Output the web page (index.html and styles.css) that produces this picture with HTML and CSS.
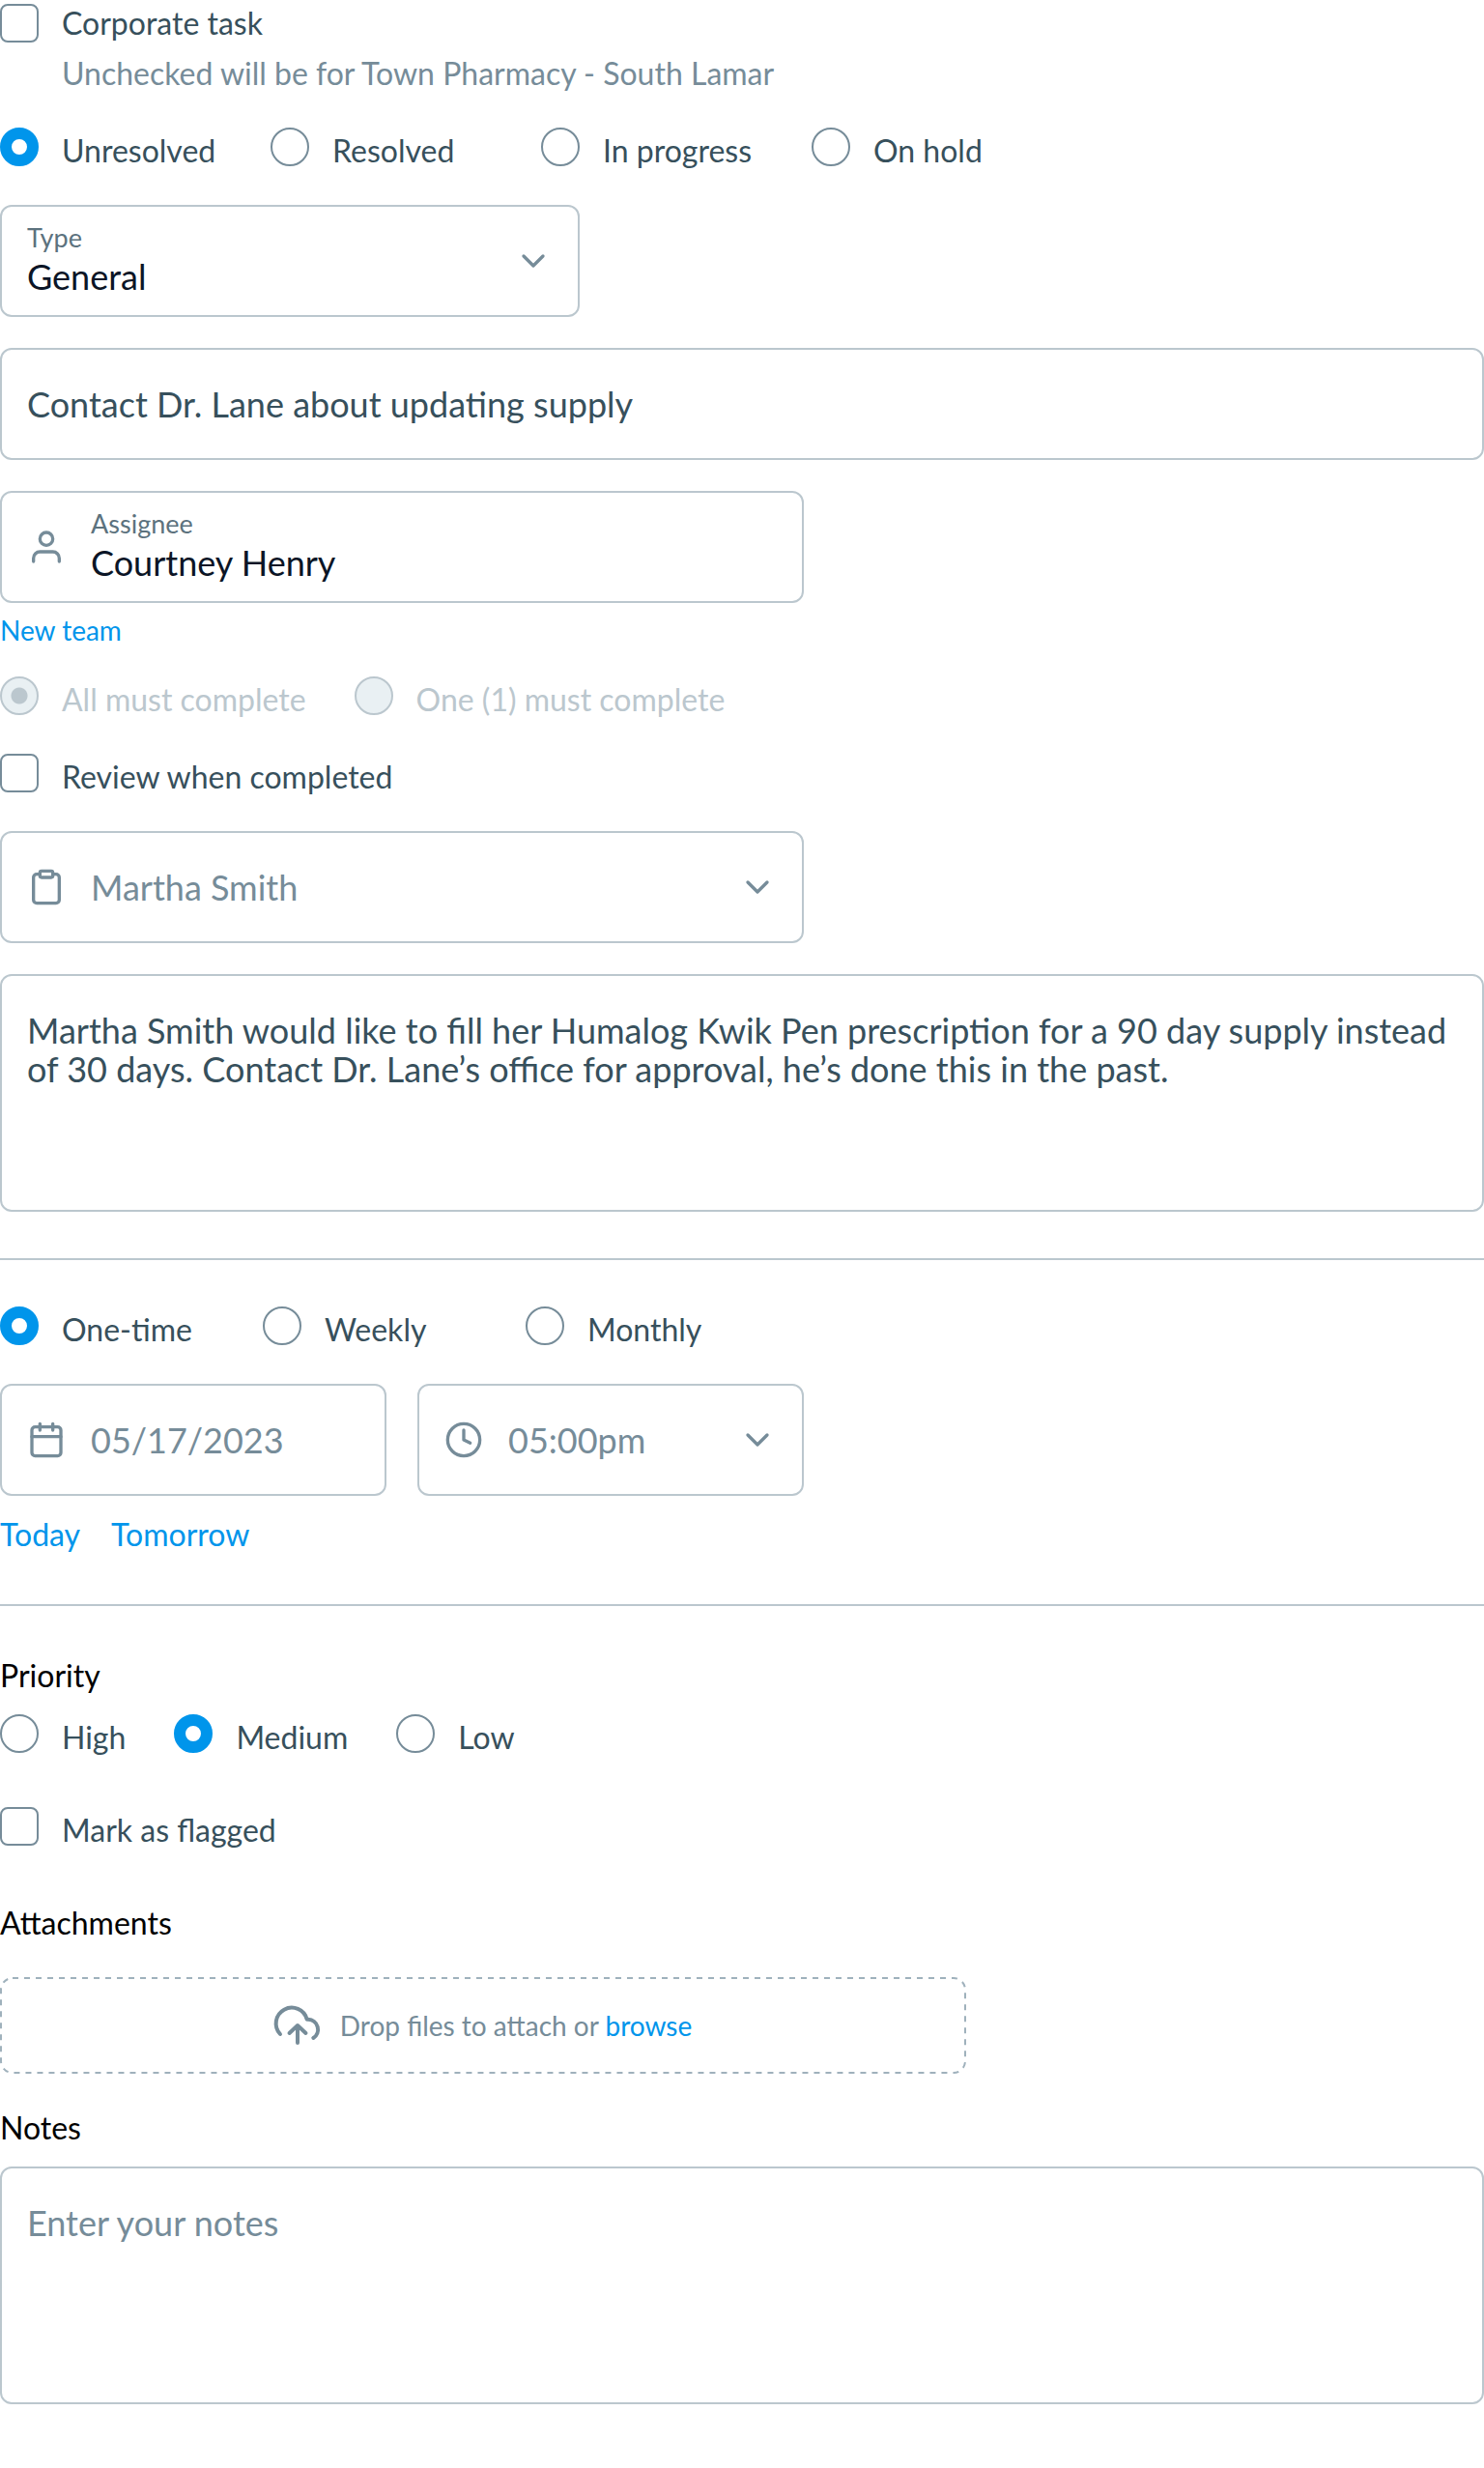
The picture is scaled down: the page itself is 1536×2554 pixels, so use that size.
FILE: index.html
```html
<!DOCTYPE html>
<html lang="en">
<head>
<meta charset="utf-8">
<meta name="viewport" content="width=device-width, initial-scale=1">
<title>Edit task</title>
<link rel="stylesheet" href="styles.css">
</head>
<body>
<form class="task-form">
  <div class="check-block">
    <label class="option"><input type="checkbox" class="box" aria-describedby="corp-hint"><span>Corporate task</span></label>
    <p class="hint" id="corp-hint">Unchecked will be for Town Pharmacy - South Lamar</p>
  </div>

  <div class="options options-status" role="radiogroup" aria-label="Status">
    <label class="option low"><input type="radio" class="dot" name="status" checked><span>Unresolved</span></label>
    <label class="option low"><input type="radio" class="dot" name="status"><span>Resolved</span></label>
    <label class="option low"><input type="radio" class="dot" name="status"><span>In progress</span></label>
    <label class="option low"><input type="radio" class="dot" name="status"><span>On hold</span></label>
  </div>

  <div class="field field-type">
    <div class="field-body">
      <label class="field-label" for="type">Type</label>
      <select id="type" class="control strong"><option>General</option></select>
    </div>
    <svg class="chevron" viewBox="0 0 24 24" aria-hidden="true"><path d="M6 9l6 6 6-6"/></svg>
  </div>

  <div class="field">
    <input type="text" class="control" aria-label="Title" value="Contact Dr. Lane about updating supply">
  </div>

  <div class="field field-half">
    <svg class="icon" viewBox="0 0 24 24" aria-hidden="true"><path d="M20 21v-2a4 4 0 0 0-4-4H8a4 4 0 0 0-4 4v2"/><circle cx="12" cy="7" r="4"/></svg>
    <div class="field-body">
      <label class="field-label" for="assignee">Assignee</label>
      <input type="text" id="assignee" class="control strong" value="Courtney Henry">
    </div>
  </div>
  <a class="link link-small" href="#new-team">New team</a>

  <div class="options options-rule" role="radiogroup" aria-label="Completion rule">
    <label class="option low disabled"><input type="radio" class="dot" name="rule" checked disabled><span>All must complete</span></label>
    <label class="option low disabled"><input type="radio" class="dot" name="rule" disabled><span>One (1) must complete</span></label>
  </div>

  <label class="option low review"><input type="checkbox" class="box"><span>Review when completed</span></label>

  <div class="field field-half">
    <svg class="icon" viewBox="0 0 24 24" aria-hidden="true"><path d="M16 4h2a2 2 0 0 1 2 2v14a2 2 0 0 1-2 2H6a2 2 0 0 1-2-2V6a2 2 0 0 1 2-2h2"/><rect x="8" y="2" width="8" height="4" rx="1"/></svg>
    <select class="control muted" aria-label="Patient"><option>Martha Smith</option></select>
    <svg class="chevron" viewBox="0 0 24 24" aria-hidden="true"><path d="M6 9l6 6 6-6"/></svg>
  </div>

  <textarea class="area" aria-label="Description">Martha Smith would like to fill her Humalog Kwik Pen prescription for a 90 day supply instead of 30 days. Contact Dr. Lane’s office for approval, he’s done this in the past.</textarea>

  <hr class="rule">

  <div class="options options-repeat" role="radiogroup" aria-label="Repeat">
    <label class="option low"><input type="radio" class="dot" name="repeat" checked><span>One-time</span></label>
    <label class="option low"><input type="radio" class="dot" name="repeat"><span>Weekly</span></label>
    <label class="option low"><input type="radio" class="dot" name="repeat"><span>Monthly</span></label>
  </div>

  <div class="due">
    <div class="field">
      <svg class="icon" viewBox="0 0 24 24" aria-hidden="true"><rect x="3" y="4" width="18" height="18" rx="2"/><path d="M16 2v4M8 2v4M3 10h18"/></svg>
      <input type="text" class="control muted" aria-label="Due date" value="05/17/2023">
    </div>
    <div class="field">
      <svg class="icon" viewBox="0 0 24 24" aria-hidden="true"><circle cx="12" cy="12" r="10"/><path d="M12 6v6l4 2"/></svg>
      <select class="control muted" aria-label="Due time"><option>05:00pm</option></select>
      <svg class="chevron" viewBox="0 0 24 24" aria-hidden="true"><path d="M6 9l6 6 6-6"/></svg>
    </div>
  </div>
  <div class="shortcuts">
    <a class="link" href="#today">Today</a>
    <a class="link" href="#tomorrow">Tomorrow</a>
  </div>

  <hr class="rule rule-low">

  <h2 class="heading" id="priority">Priority</h2>
  <div class="options options-priority" role="radiogroup" aria-labelledby="priority">
    <label class="option low"><input type="radio" class="dot" name="priority"><span>High</span></label>
    <label class="option low"><input type="radio" class="dot" name="priority" checked><span>Medium</span></label>
    <label class="option low"><input type="radio" class="dot" name="priority"><span>Low</span></label>
  </div>

  <label class="option low flag"><input type="checkbox" class="box"><span>Mark as flagged</span></label>

  <h2 class="heading attachments">Attachments</h2>
  <div class="drop">
    <svg class="drop-edge" aria-hidden="true"><rect x="1" y="1" rx="12"/></svg>
    <svg class="cloud" viewBox="0 0 48 40" aria-hidden="true"><path d="M6 29A16.300 16.300 0 1 1 33.700 13.700H35A10.500 10.500 0 0 1 40.300 33M24 38V20M15.500 28L24 20l8.500 8"/></svg>
    <p class="drop-text">Drop files to attach or <a class="link" href="#browse">browse</a></p>
  </div>

  <label class="heading notes-label" for="notes">Notes</label>
  <textarea class="area" id="notes" placeholder="Enter your notes"></textarea>
</form>
</body>
</html>
```
FILE: styles.css
```css
:root {
  --text: #37505c;
  --muted: #768c99;
  --edge: #bbc7ce;
  --accent: #0095eb;
}

* {
  box-sizing: border-box;
}

body {
  margin: 0;
  background: #fff;
  color: var(--text);
  font: 32px/40px Lato, "Liberation Sans", sans-serif;
}

.task-form {
  display: flex;
  flex-direction: column;
  padding: 4px 0 66px;
}

p,
h2 {
  margin: 0;
}

.option {
  display: flex;
  gap: 24px;
}

.low span {
  padding-top: 4px;
}

.hint {
  margin-top: 12px;
  padding-left: 64px;
  color: var(--muted);
}

.box,
.dot {
  flex: none;
  appearance: none;
  width: 40px;
  height: 40px;
  margin: 0;
  border: 2px solid var(--muted);
  background: #fff;
}

.box {
  border-radius: 8px;
}

.dot {
  border-radius: 50%;
}

.dot:checked {
  border: 12px solid var(--accent);
}

.dot:disabled {
  border: 2px solid var(--edge);
  background: #e9f0f3;
}

.dot:disabled:checked {
  background: radial-gradient(circle, var(--edge) 8px, #e9f0f3 9px);
}

.disabled {
  color: var(--edge);
}

.options {
  display: grid;
  justify-content: start;
}

.options-status {
  grid-template-columns: repeat(auto-fit, 280px);
  margin: 36px 0;
}

.options-rule {
  grid-auto-flow: column;
  gap: 50px;
  margin-top: 28px;
}

.options-repeat {
  grid-template-columns: repeat(auto-fit, 272px);
  margin: 48px 0 36px;
}

.options-priority {
  grid-auto-flow: column;
  gap: 50px;
  margin-top: 20px;
}

.review {
  margin: 36px 0;
}

.field {
  display: flex;
  align-items: center;
  max-width: 100%;
  height: 116px;
  margin-bottom: 32px;
  padding: 0 26px;
  border: 2px solid var(--edge);
  border-radius: 12px;
}

.field-type {
  width: 600px;
}

.field-half {
  width: 832px;
}

.icon,
.chevron {
  flex: none;
  width: 40px;
  height: 40px;
  fill: none;
  stroke: var(--muted);
  stroke-width: 2;
  stroke-linecap: round;
  stroke-linejoin: round;
}

.icon {
  margin-right: 26px;
}

.field-body {
  display: flex;
  flex: 1;
  flex-direction: column;
  gap: 2px;
  padding-bottom: 2px;
}

.field-label {
  color: #5c727e;
  font-size: 27px;
  line-height: 32px;
}

.control {
  flex: 1;
  appearance: none;
  min-width: 0;
  margin: 0;
  padding: 0;
  border: 0;
  background: none;
  color: var(--text);
  font: inherit;
  font-size: 36px;
  line-height: 44px;
}

.field-body .control {
  flex: none;
  height: 44px;
}

.strong {
  color: #0b1526;
}

.muted {
  color: var(--muted);
}

.link {
  color: var(--accent);
  text-decoration: none;
}

.link-small {
  align-self: flex-start;
  margin-top: -24px;
  font-size: 28px;
}

.area {
  height: 246px;
  padding: 36px 26px;
  border: 2px solid var(--edge);
  border-radius: 12px;
  background: none;
  color: var(--text);
  font: inherit;
  font-size: 36px;
  resize: none;
}

.area::placeholder {
  color: var(--muted);
}

.rule {
  width: 100%;
  height: 2px;
  margin: 48px 0 0;
  border: 0;
  background: var(--edge);
}

.rule-low {
  margin-top: 52px;
}

.due {
  display: grid;
  grid-template-columns: repeat(2, minmax(0, 400px));
  gap: 32px;
}

.due .field {
  margin-bottom: 20px;
}

.shortcuts {
  display: flex;
  gap: 32px;
}

.heading {
  color: #000;
  font-size: 32px;
  font-weight: 400;
}

.rule + .heading {
  margin-top: 52px;
}

.flag {
  margin-top: 52px;
}

.attachments {
  margin-top: 56px;
}

.drop {
  position: relative;
  display: flex;
  align-items: center;
  justify-content: center;
  gap: 20px;
  width: 1000px;
  max-width: 100%;
  height: 100px;
  margin-top: 36px;
}

.drop-edge {
  position: absolute;
  inset: 0;
  width: 100%;
  height: 100%;
  fill: none;
  stroke: #9fb1bc;
  stroke-width: 2;
  stroke-dasharray: 6;
}

.drop-edge rect {
  width: calc(100% - 2px);
  height: calc(100% - 2px);
}

.cloud {
  width: 48px;
  height: 40px;
  overflow: visible;
  fill: none;
  stroke: var(--muted);
  stroke-width: 4;
  stroke-linecap: round;
  stroke-linejoin: round;
}

.drop-text {
  position: relative;
  color: var(--muted);
  font-size: 28px;
}

.notes-label {
  margin: 36px 0 20px;
}
```
